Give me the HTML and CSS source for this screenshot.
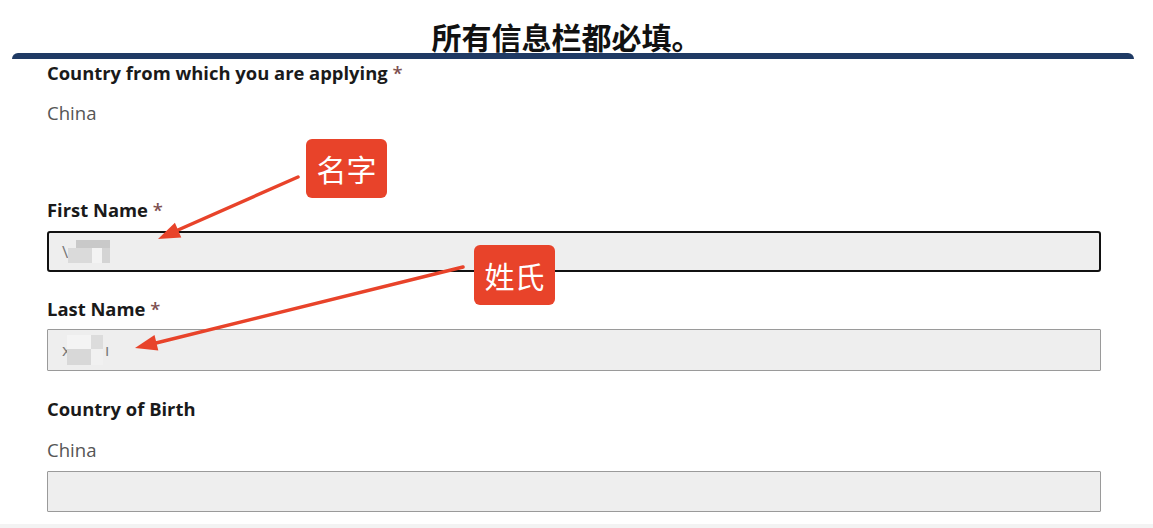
FILE: index.html
```html
<!DOCTYPE html>
<html lang="zh">
<head>
<meta charset="utf-8">
<link rel="stylesheet" href="styles.css">
</head>
<body>
<div class="page">
  <h1 class="title">所有信息栏都必填。</h1>
  <div class="bar"></div>
  <div class="form">
    <div class="label first">Country from which you are applying <span class="req">*</span></div>
    <div class="value">China</div>

    <div class="label fn">First Name <span class="req">*</span></div>
    <div class="input focused"><span class="ch">\</span><span class="mask m1"></span></div>

    <div class="label ln">Last Name <span class="req">*</span></div>
    <div class="input"><span class="ch">x</span><span class="mask m2"></span><span class="ch">ı</span></div>

    <div class="label cb">Country of Birth</div>
    <div class="value v2">China</div>
    <div class="input last"></div>
  </div>
  <div class="footer"></div>

  <svg class="arrows" width="1153" height="528" viewBox="0 0 1153 528">
    <line x1="298" y1="177" x2="178" y2="230" stroke="#e8432a" stroke-width="3.5" stroke-linecap="round"/>
    <polygon points="158,239 181.3,237.4 174.9,222.8" fill="#e8432a"/>
    <line x1="463" y1="267" x2="156" y2="343" stroke="#e8432a" stroke-width="3.5" stroke-linecap="round"/>
    <polygon points="135,348 158.3,350.5 154.5,334.9" fill="#e8432a"/>
  </svg>
  <div class="tag tag1">名字</div>
  <div class="tag tag2">姓氏</div>
</div>
</body>
</html>
```
FILE: styles.css
```css
html, body {
  margin: 0;
  padding: 0;
  background: #ffffff;
}
.page {
  position: relative;
  width: 1153px;
  height: 528px;
  overflow: hidden;
  font-family: "Open Sans", "Noto Sans", sans-serif;
}
.title {
  margin: 19px 0 0 0;
  padding-right: 20px;
  text-align: center;
  font-family: "Noto Sans CJK SC", sans-serif;
  font-weight: 700;
  font-size: 30px;
  line-height: 34px;
  color: #111;
}
.bar {
  margin: 0 19px 0 12px;
  height: 6px;
  background: #1f3a64;
  border-radius: 7px 7px 0 0;
}
.form {
  padding-left: 47px;
  width: 1054px;
}
.label {
  font-weight: 700;
  font-size: 18.4px;
  line-height: 24px;
  color: #1a1a1a;
}
.req {
  color: #7d5050;
  font-weight: 600;
}
.label.first { margin-top: 2px; }
.value {
  margin-top: 16px;
  font-size: 18.6px;
  line-height: 24px;
  color: #555;
}
.label.fn { margin-top: 73px; }
.label.ln { margin-top: 25px; }
.label.cb { margin-top: 26px; }
.value.v2 { margin-top: 17px; }
.input {
  box-sizing: border-box;
  margin-top: 8px;
  height: 42px;
  background: #eeeeee;
  border: 1px solid #9a9a9a;
  border-radius: 1px;
  display: flex;
  align-items: center;
  padding-left: 14px;
  font-size: 17px;
  color: #777;
}
.input.focused {
  margin-top: 9px;
  height: 41px;
  border: 2px solid #111;
  border-radius: 3px;
  padding-left: 13px;
}
.input.last { margin-top: 9px; height: 41px; }
.ch { line-height: 20px; }
.mask {
  display: inline-block;
}
.m1 {
  width: 42px;
  height: 23px;
  background:
    linear-gradient(#c9c9c9, #c9c9c9) 8px 0 / 34px 8px no-repeat,
    linear-gradient(#dadada, #dadada) 0 8px / 24px 15px no-repeat,
    linear-gradient(#f3f3f3, #f3f3f3) 24px 8px / 10px 15px no-repeat,
    linear-gradient(#d4d4d4, #d4d4d4) 34px 8px / 8px 15px no-repeat;
}
.m2 {
  width: 36px;
  height: 30px;
  margin-left: -4px;
  margin-right: 2px;
  background:
    linear-gradient(#f4f4f4, #f4f4f4) 0 0 / 24px 14px no-repeat,
    linear-gradient(#dcdcdc, #dcdcdc) 24px 0 / 12px 14px no-repeat,
    linear-gradient(#d8d8d8, #d8d8d8) 0 14px / 24px 16px no-repeat,
    linear-gradient(#f1f1f1, #f1f1f1) 24px 14px / 12px 16px no-repeat;
}
.footer {
  margin-top: 12px;
  height: 6px;
  background: #f3f3f3;
}
.arrows {
  position: absolute;
  left: 0;
  top: 0;
  pointer-events: none;
}
.tag {
  position: absolute;
  width: 81px;
  height: 59px;
  background: #e8432a;
  border-radius: 6px;
  color: #fff;
  font-family: "Noto Sans CJK SC", sans-serif;
  font-size: 30px;
  line-height: 59px;
  text-align: center;
}
.tag1 { left: 306px; top: 139px; }
.tag2 { left: 474px; top: 245px; height: 60px; line-height: 60px; }
```
